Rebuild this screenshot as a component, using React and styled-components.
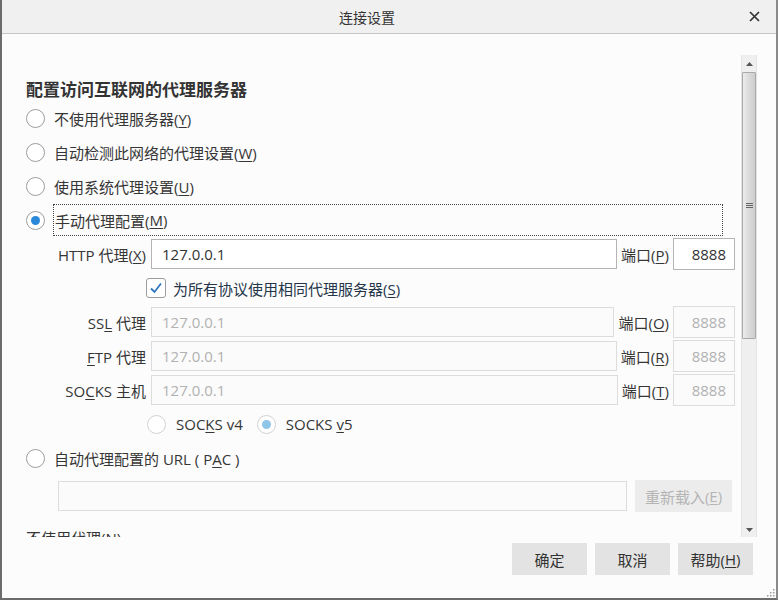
import React from 'react';
import styled, { createGlobalStyle } from 'styled-components';

const GlobalStyle = createGlobalStyle`
  html, body {
    margin: 0;
    padding: 0;
    background: #fcfcfc;
  }
`;

const Window = styled('div')`
  position: relative;
  width: 778px;
  height: 600px;
  box-sizing: border-box;
  border-left: 2px solid #6c6c6c;
  border-right: 2px solid #8a8a8a;
  border-bottom: 2px solid #6c6c6c;
  background: #fcfcfc;
  display: flex;
  flex-direction: column;
  font-family: "Open Sans", "Noto Sans CJK SC", sans-serif;
  font-size: 15px;
  color: #363636;
`;

const TitleBar = styled('div')`
  height: 34px;
  box-sizing: border-box;
  flex-shrink: 0;
  display: flex;
  align-items: center;
  background: #f0f0f0;
  border-bottom: 1px solid #c6c6c6;
`;

const Title = styled('div')`
  flex: 1;
  text-align: center;
  font-size: 14px;
  color: #333;
`;

const CloseButton = styled('div')`
  width: 44px;
  height: 33px;
  display: flex;
  align-items: center;
  justify-content: center;
`;

const Body = styled('div')`
  flex: 1;
  display: flex;
  flex-direction: column;
  min-height: 0;
`;

const ScrollArea = styled('div')`
  display: flex;
  height: 482px;
  margin-top: 21px;
  margin-right: 19px;
  overflow: hidden;
`;

const Content = styled('div')`
  flex: 1;
  display: flex;
  flex-direction: column;
  padding: 21px 6px 0 24px;
  overflow: hidden;
`;

const Heading = styled('div')`
  height: 25px;
  line-height: 25px;
  font-size: 17px;
  font-weight: bold;
  color: #333;
  font-family: "Noto Sans CJK SC", sans-serif;
`;

const Row = styled('div')`
  display: flex;
  align-items: center;
  height: 34px;
  flex-shrink: 0;
  margin-top: ${props => props.$mt || 0}px;
  margin-left: ${props => props.$indent || 0}px;
`;

const Radio = styled('span')`
  width: 19px;
  height: 19px;
  box-sizing: border-box;
  border-radius: 50%;
  border: 1px solid ${props => (props.$disabled ? '#d2d2d2' : '#9c9c9c')};
  background: #fff;
  display: flex;
  align-items: center;
  justify-content: center;
  flex-shrink: 0;
  margin-right: ${props => props.$gap || 9}px;

  &::after {
    content: '';
    width: 9px;
    height: 9px;
    border-radius: 50%;
    background: ${props => (props.$disabled ? '#8ec5e8' : '#2b88d8')};
    display: ${props => (props.$checked ? 'block' : 'none')};
  }
`;

const Label = styled('span')`
  white-space: nowrap;
`;

const FocusLabel = styled('span')`
  flex: 1;
  height: 32px;
  box-sizing: border-box;
  margin-right: 12px;
  padding-left: 1px;
  border: 1px dotted #444;
  display: flex;
  align-items: center;
`;

const Key = styled('u')`
  text-decoration: underline;
  text-underline-offset: 2px;
`;

const Indent = styled('div')`
  display: flex;
  flex-direction: column;
  margin-left: 28px;
`;

const FieldLabel = styled('span')`
  width: 92px;
  flex-shrink: 0;
  text-align: right;
  white-space: nowrap;
  margin-right: 5px;
`;

const TextBox = styled('div')`
  flex: 1;
  height: 30px;
  box-sizing: border-box;
  border: 1px solid ${props => (props.$disabled ? '#dcdcdc' : '#b4b4b4')};
  background: ${props => (props.$disabled ? '#fbfbfb' : '#fff')};
  color: ${props => (props.$disabled ? '#b2b2b2' : '#333')};
  padding: 0 10px;
  display: flex;
  align-items: center;
  justify-content: ${props => (props.$right ? 'flex-end' : 'flex-start')};
`;

const PortLabel = styled('span')`
  white-space: nowrap;
  margin: 0 4px;
`;

const PortBox = styled(TextBox)`
  flex: none;
  width: 62px;
  height: 32px;
  padding: 0 8px;
`;

const CheckBox = styled('span')`
  width: 20px;
  height: 20px;
  box-sizing: border-box;
  border: 1px solid #9c9c9c;
  border-radius: 3px;
  background: #fff;
  display: flex;
  align-items: center;
  justify-content: center;
  margin-right: 7px;
`;

const CheckText = styled('span')`
  color: #25364a;
  white-space: nowrap;
`;

const SocksGroup = styled('div')`
  display: flex;
  align-items: center;
  margin-right: 14px;
`;

const PacBox = styled(TextBox)`
  margin-right: 8px;
`;

const GhostButton = styled('div')`
  width: 97px;
  height: 32px;
  margin-right: 3px;
  background: #ececec;
  color: #b4b4b4;
  display: flex;
  align-items: center;
  justify-content: center;
  white-space: nowrap;
`;

const Scrollbar = styled('div')`
  width: 16px;
  flex-shrink: 0;
  display: flex;
  flex-direction: column;
  background: #efefef;
  border-left: 1px solid #e4e4e4;
  border-right: 1px solid #e4e4e4;
  box-sizing: border-box;
`;

const ArrowBox = styled('div')`
  height: ${props => props.$h}px;
  display: flex;
  align-items: center;
  justify-content: center;
  flex-shrink: 0;
`;

const Track = styled('div')`
  flex: 1;
  display: flex;
  flex-direction: column;
`;

const Thumb = styled('div')`
  height: 267px;
  box-sizing: border-box;
  border: 1px solid #a9a9a9;
  border-radius: 1px;
  background: linear-gradient(to right, #ececec 0%, #dcdcdc 45%, #cdcdcd 100%);
  display: flex;
  align-items: center;
  justify-content: center;
`;

const Footer = styled('div')`
  display: flex;
  justify-content: flex-end;
  gap: 8px;
  padding: 6px 23px 0 0;
`;

const Button = styled('div')`
  width: 75px;
  height: 32px;
  background: #e3e3e3;
  color: #333;
  display: flex;
  align-items: center;
  justify-content: center;
  white-space: nowrap;
`;

const Grip = styled('svg')`
  position: absolute;
  right: 1px;
  bottom: 1px;
`;

const proxies = [
  { label: <>SS<Key>L</Key> 代理</>, port: 'O' },
  { label: <><Key>F</Key>TP 代理</>, port: 'R' },
  { label: <>SO<Key>C</Key>KS 主机</>, port: 'T' },
];

const App = () => (
  <>
    <GlobalStyle />
    <Window>
      <TitleBar>
        <Title>连接设置</Title>
        <CloseButton>
          <svg width="11" height="11" viewBox="0 0 11 11">
            <path d="M1 1L10 10M10 1L1 10" stroke="#333" strokeWidth="1.7" />
          </svg>
        </CloseButton>
      </TitleBar>
      <Body>
        <ScrollArea>
          <Content>
            <Heading>配置访问互联网的代理服务器</Heading>
            <Row>
              <Radio />
              <Label>不使用代理服务器(<Key>Y</Key>)</Label>
            </Row>
            <Row>
              <Radio />
              <Label>自动检测此网络的代理设置(<Key>W</Key>)</Label>
            </Row>
            <Row>
              <Radio />
              <Label>使用系统代理设置(<Key>U</Key>)</Label>
            </Row>
            <Row>
              <Radio $checked $gap={8} />
              <FocusLabel>手动代理配置(<Key>M</Key>)</FocusLabel>
            </Row>
            <Indent>
              <Row>
                <FieldLabel>HTTP 代理(<Key>X</Key>)</FieldLabel>
                <TextBox>127.0.0.1</TextBox>
                <PortLabel>端口(<Key>P</Key>)</PortLabel>
                <PortBox $right>8888</PortBox>
              </Row>
              <Row $indent={92}>
                <CheckBox>
                  <svg width="14" height="14" viewBox="0 0 14 14">
                    <path d="M2 7.5L5.5 11L12 2.5" fill="none" stroke="#2f76c2" strokeWidth="1.8" />
                  </svg>
                </CheckBox>
                <CheckText>为所有协议使用相同代理服务器(<Key>S</Key>)</CheckText>
              </Row>
              {proxies.map(p => (
                <Row key={p.port}>
                  <FieldLabel>{p.label}</FieldLabel>
                  <TextBox $disabled>127.0.0.1</TextBox>
                  <PortLabel>端口(<Key>{p.port}</Key>)</PortLabel>
                  <PortBox $disabled $right>8888</PortBox>
                </Row>
              ))}
              <Row $indent={93}>
                <SocksGroup>
                  <Radio $disabled $gap={10} />
                  <Label>SOC<Key>K</Key>S v4</Label>
                </SocksGroup>
                <SocksGroup>
                  <Radio $disabled $checked $gap={10} />
                  <Label>SOCKS <Key>v</Key>5</Label>
                </SocksGroup>
              </Row>
            </Indent>
            <Row>
              <Radio />
              <Label>自动代理配置的 URL ( P<Key>A</Key>C )</Label>
            </Row>
            <Row $mt={4} $indent={32}>
              <PacBox $disabled />
              <GhostButton>重新载入(<Key>E</Key>)</GhostButton>
            </Row>
            <Row $mt={7}>
              <Label>不使用代理(<Key>N</Key>)</Label>
            </Row>
          </Content>
          <Scrollbar>
            <ArrowBox $h={17}>
              <svg width="7" height="4" viewBox="0 0 7 4">
                <path d="M0 4L3.5 0L7 4Z" fill="#555" />
              </svg>
            </ArrowBox>
            <Track>
              <Thumb>
                <svg width="7" height="7" viewBox="0 0 7 7">
                  <path d="M0 1.5H7M0 3.5H7M0 5.5H7" stroke="#666" strokeWidth="1" />
                </svg>
              </Thumb>
            </Track>
            <ArrowBox $h={14}>
              <svg width="7" height="4" viewBox="0 0 7 4">
                <path d="M0 0L3.5 4L7 0Z" fill="#555" />
              </svg>
            </ArrowBox>
          </Scrollbar>
        </ScrollArea>
        <Footer>
          <Button>确定</Button>
          <Button>取消</Button>
          <Button>帮助(<Key>H</Key>)</Button>
        </Footer>
      </Body>
      <Grip width="9" height="9" viewBox="0 0 9 9">
        <g fill="#9a9a9a">
          <rect x="7" y="1" width="1.5" height="1.5" />
          <rect x="4" y="4" width="1.5" height="1.5" />
          <rect x="7" y="4" width="1.5" height="1.5" />
          <rect x="1" y="7" width="1.5" height="1.5" />
          <rect x="4" y="7" width="1.5" height="1.5" />
          <rect x="7" y="7" width="1.5" height="1.5" />
        </g>
      </Grip>
    </Window>
  </>
);

export default App;
